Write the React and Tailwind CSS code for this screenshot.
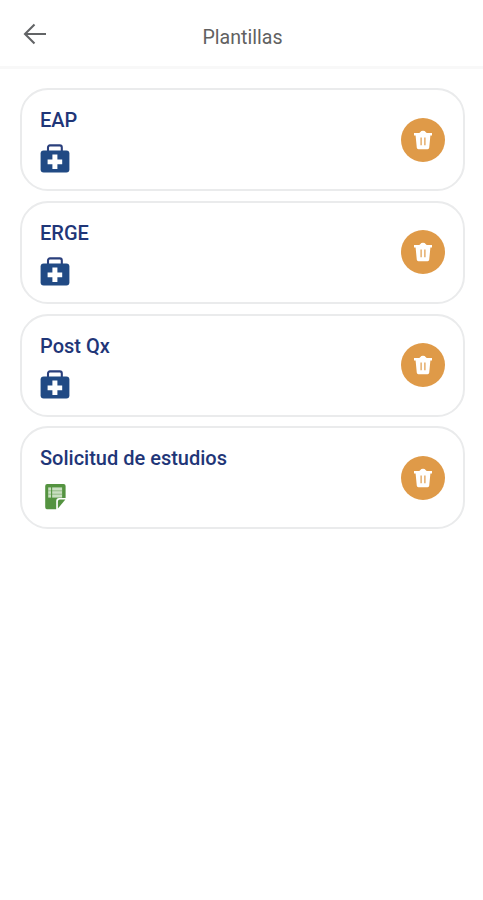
import React, { useState } from "react";

const initialTemplates = [
  { id: 1, name: "EAP", type: "medical" },
  { id: 2, name: "ERGE", type: "medical" },
  { id: 3, name: "Post Qx", type: "medical" },
  { id: 4, name: "Solicitud de estudios", type: "study" },
];

const BackIcon = () => (
  <svg width="24" height="22" viewBox="0 0 24 22" fill="none" stroke="#626466" strokeWidth="2.1">
    <path d="M23 11H2.5M11.5 1.5L2 11l9.5 9.5" />
  </svg>
);

const MedicalIcon = () => (
  <svg width="30" height="30" viewBox="0 0 30 30">
    <path d="M8 8V3.4a2 2 0 0 1 2-2h9.8a2 2 0 0 1 2 2V8" fill="none" stroke="#2a3f7c" strokeWidth="2.1" />
    <rect x="0.6" y="6.6" width="28.8" height="22" rx="3" fill="#214a84" />
    <path d="M12.4 10.6h5v4.8h4.8v4.8h-4.8V25h-5v-4.8H7.6v-4.8h4.8z" fill="#fff" />
  </svg>
);

const StudyIcon = () => (
  <svg width="30" height="30" viewBox="0 0 30 30">
    <path d="M7.2 2h16.4a2 2 0 0 1 2 2v12h-6.4a3 3 0 0 0-3 3v8.3h-9a2 2 0 0 1-2-2V4a2 2 0 0 1 2-2z" fill="#549340" />
    <path d="M17.9 26.4v-6.9a2 2 0 0 1 2-2h5.5z" fill="#549340" />
    <path d="M8.2 5.4h13.9v10.2H8.2z" fill="#c9dec1" />
    <path d="M8 8.8h14.2M8 12.2h14.2" stroke="#8db87f" strokeWidth="0.9" />
    <path d="M11.6 5v11" stroke="#549340" strokeWidth="1.1" />
  </svg>
);

const TrashIcon = () => (
  <svg width="20" height="20" viewBox="0 0 20 20">
    <path d="M1 2.9h5.2q.8 0 1.2-.8.6-1.3 2.6-1.3t2.6 1.3q.4.8 1.2.8H19v2.6h-1.6l-1.2 12.3a1.6 1.6 0 0 1-1.6 1.4H5.4a1.6 1.6 0 0 1-1.6-1.4L2.6 5.5H1z" fill="#fff" />
    <path d="M8.1 7.6v7.6M11.9 7.6v7.6" stroke="#df9a48" strokeWidth="1.2" />
  </svg>
);

const App = () => {
  const [templates, setTemplates] = useState(initialTemplates);

  const handleDelete = (id) => {
    setTemplates(templates.filter((t) => t.id !== id));
  };

  return (
    <div className="min-h-screen bg-white font-['Roboto',sans-serif]">
      {/* Header */}
      <header className="grid h-[69px] grid-cols-[1fr_auto_1fr] items-center border-b-3 border-[#f8f8f8] px-[23px]">
        <button type="button" aria-label="Volver" className="w-6 pt-px">
          <BackIcon />
        </button>
        <h1 className="pt-[9px] pl-[2px] text-[19.6px] leading-6 text-[#616161]">
          Plantillas
        </h1>
      </header>

      {/* Templates */}
      <ul className="space-y-[9.8px] pt-[19px] pr-[18px] pl-5">
        {templates.map((template) => (
          <li
            key={template.id}
            className="flex h-[103px] items-center justify-between rounded-[28px] border-2 border-[#eaebec] px-[18px]"
          >
            <div className="pt-[3px]">
              <h2 className="text-[20px] leading-6 font-medium text-[#1f3678]">
                {template.name}
              </h2>
              <div className="mt-3 h-[30px]">
                {template.type === "medical" ? <MedicalIcon /> : <StudyIcon />}
              </div>
            </div>
            <button
              type="button"
              aria-label="Eliminar"
              onClick={() => handleDelete(template.id)}
              className="flex size-11 items-center justify-center rounded-full bg-[#df9a48]"
            >
              <TrashIcon />
            </button>
          </li>
        ))}
      </ul>
    </div>
  );
};

export default App;
